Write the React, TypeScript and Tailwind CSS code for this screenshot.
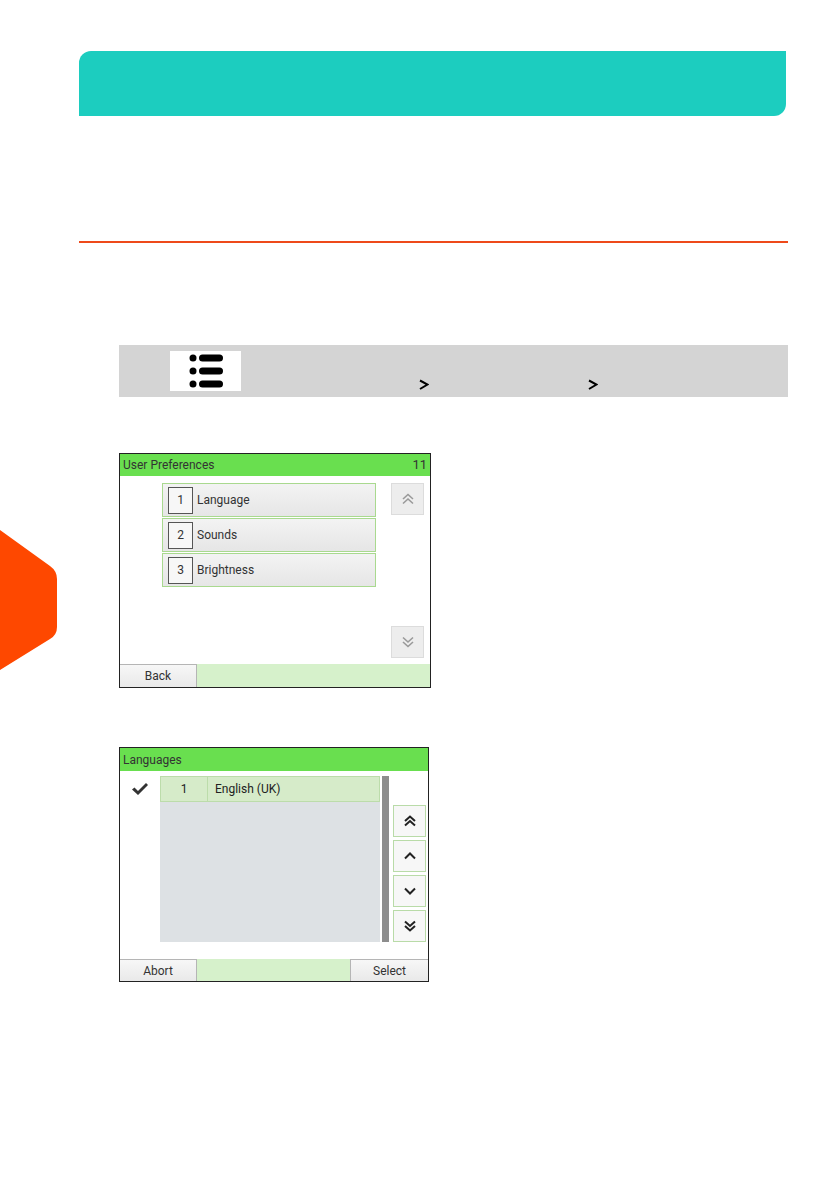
import React from "react";

const font = { fontFamily: "Roboto, 'Liberation Sans', sans-serif" };

function DoubleUp({ color = "#9a9a9a", w = 1.6 }: { color?: string; w?: number }) {
  return (
    <svg width="14" height="14" viewBox="0 0 14 14">
      <polyline points="2,7 7,2.5 12,7" fill="none" stroke={color} strokeWidth={w} />
      <polyline points="2,11.5 7,7 12,11.5" fill="none" stroke={color} strokeWidth={w} />
    </svg>
  );
}

function DoubleDown({ color = "#9a9a9a", w = 1.6 }: { color?: string; w?: number }) {
  return (
    <svg width="14" height="14" viewBox="0 0 14 14">
      <polyline points="2,2.5 7,7 12,2.5" fill="none" stroke={color} strokeWidth={w} />
      <polyline points="2,7 7,11.5 12,7" fill="none" stroke={color} strokeWidth={w} />
    </svg>
  );
}

function SingleUp() {
  return (
    <svg width="14" height="14" viewBox="0 0 14 14">
      <polyline points="2,9.5 7,4.5 12,9.5" fill="none" stroke="#222" strokeWidth={2} />
    </svg>
  );
}

function SingleDown() {
  return (
    <svg width="14" height="14" viewBox="0 0 14 14">
      <polyline points="2,4.5 7,9.5 12,4.5" fill="none" stroke="#222" strokeWidth={2} />
    </svg>
  );
}

function MenuIcon() {
  return (
    <svg width="36" height="34" viewBox="0 0 36 34">
      {[4, 17, 30].map((y) => (
        <g key={y}>
          <circle cx="5" cy={y} r="3.5" fill="#000" />
          <rect x="11" y={y - 3.5} width="24" height="7" rx="3.5" fill="#000" />
        </g>
      ))}
    </svg>
  );
}

function Crumb() {
  return (
    <svg width="10" height="12" viewBox="0 0 10 12">
      <polyline points="1,1.5 8.5,5.5 1,10" fill="none" stroke="#000" strokeWidth={2} />
    </svg>
  );
}

function MenuItem({ n, label }: { n: number; label: string }) {
  return (
    <div className="flex items-center h-[34px] border border-[#a9d98f] bg-gradient-to-b from-[#f3f3f3] to-[#e6e6e6]">
      <div className="ml-[5px] w-[25px] h-[27px] border border-[#555] bg-[#f7f7f7] flex items-center justify-center text-[12px] text-[#333]">
        {n}
      </div>
      <span className="ml-[4px] text-[12px] text-[#333]">{label}</span>
    </div>
  );
}

function SideButton({ children, light }: { children: React.ReactNode; light?: boolean }) {
  return (
    <div
      className={`w-[33px] h-[32px] flex items-center justify-center border ${
        light ? "border-[#dcdcdc] bg-[#ededed]" : "border-[#b9dba8] bg-[#f7f7f7]"
      }`}
    >
      {children}
    </div>
  );
}

function UserPreferences() {
  return (
    <div className="w-[312px] h-[235px] border border-[#222] flex flex-col" style={font}>
      <div className="h-[22px] bg-[#69df4f] flex items-center justify-between px-[3px] text-[12px] text-[#333]">
        <span>User Preferences</span>
        <span className="text-[13px]">11</span>
      </div>
      <div className="flex-1 bg-white flex">
        <div className="ml-[42px] mt-[7px] w-[214px] flex flex-col gap-[1px]">
          <MenuItem n={1} label="Language" />
          <MenuItem n={2} label="Sounds" />
          <MenuItem n={3} label="Brightness" />
        </div>
        <div className="ml-[15px] mt-[7px] mb-[6px] flex flex-col justify-between">
          <SideButton light>
            <DoubleUp />
          </SideButton>
          <SideButton light>
            <DoubleDown />
          </SideButton>
        </div>
      </div>
      <div className="h-[23px] bg-[#d6f1cb] flex">
        <div className="w-[77px] border-t border-r border-[#b5b5b5] bg-gradient-to-b from-[#f7f7f7] to-[#e9e9e9] flex items-center justify-center text-[12px] text-[#333]">
          Back
        </div>
      </div>
    </div>
  );
}

function Languages() {
  return (
    <div className="w-[310px] h-[235px] border border-[#222] flex flex-col" style={font}>
      <div className="h-[23px] bg-[#69df4f] flex items-center px-[3px] text-[12px] text-[#333]">
        <span>Languages</span>
      </div>
      <div className="flex-1 bg-white flex">
        <div className="w-[40px] flex justify-center pt-[11px]">
          <svg width="18" height="14" viewBox="0 0 18 14">
            <path d="M1 7.5 L3.5 5.5 L7 9 L15 1 L17 3 L7 13 Z" fill="#333" />
          </svg>
        </div>
        <div className="mt-[5px] mb-[17px] w-[220px] flex flex-col bg-[#dde1e4]">
          <div className="h-[26px] flex border border-[#bcdcaa] bg-[#d6ebc9] text-[12px] text-[#222]">
            <div className="w-[47px] border-r border-[#bcdcaa] flex items-center justify-center">1</div>
            <div className="flex items-center pl-[7px]">English (UK)</div>
          </div>
        </div>
        <div className="ml-[2px] mt-[5px] mb-[17px] w-[7px] bg-[#8d8d8d]" />
        <div className="ml-[4px] mt-[34px] flex flex-col gap-[3px]">
          <SideButton>
            <DoubleUp color="#222" w={2} />
          </SideButton>
          <SideButton>
            <SingleUp />
          </SideButton>
          <SideButton>
            <SingleDown />
          </SideButton>
          <SideButton>
            <DoubleDown color="#222" w={2} />
          </SideButton>
        </div>
      </div>
      <div className="h-[22px] bg-[#d6f1cb] flex justify-between">
        <div className="w-[77px] border-t border-r border-[#b5b5b5] bg-gradient-to-b from-[#f7f7f7] to-[#e9e9e9] flex items-center justify-center text-[12px] text-[#333]">
          Abort
        </div>
        <div className="w-[78px] border-t border-l border-[#b5b5b5] bg-gradient-to-b from-[#f7f7f7] to-[#e9e9e9] flex items-center justify-center text-[12px] text-[#333]">
          Select
        </div>
      </div>
    </div>
  );
}

export default function App() {
  return (
    <div className="relative w-[839px] h-[1191px] bg-white overflow-hidden">
      <svg className="absolute left-0 top-[530px]" width="58" height="140" viewBox="0 0 58 140">
        <path d="M0 0 L50 36 Q57 41 57 49 L57 97 Q57 105 50 109 L0 140 Z" fill="#fe4800" />
      </svg>

      <div className="pl-[79px] pt-[51px] flex flex-col">
        <div className="w-[707px] h-[65px] bg-[#1ccdbf] rounded-tl-[12px] rounded-br-[12px]" />

        <div className="mt-[125px] w-[709px] h-[2px] bg-[#ee4a1a]" />

        <div className="mt-[102px] ml-[40px] w-[669px] h-[52px] bg-[#d4d4d4] flex items-start">
          <div className="ml-[51px] mt-[6px] w-[71px] h-[40px] bg-white flex items-center justify-center">
            <MenuIcon />
          </div>
          <div className="ml-[178px] mt-[34px] flex">
            <Crumb />
          </div>
          <div className="ml-[159px] mt-[34px] flex">
            <Crumb />
          </div>
        </div>

        <div className="mt-[56px] ml-[40px]">
          <UserPreferences />
        </div>

        <div className="mt-[59px] ml-[40px]">
          <Languages />
        </div>
      </div>
    </div>
  );
}
